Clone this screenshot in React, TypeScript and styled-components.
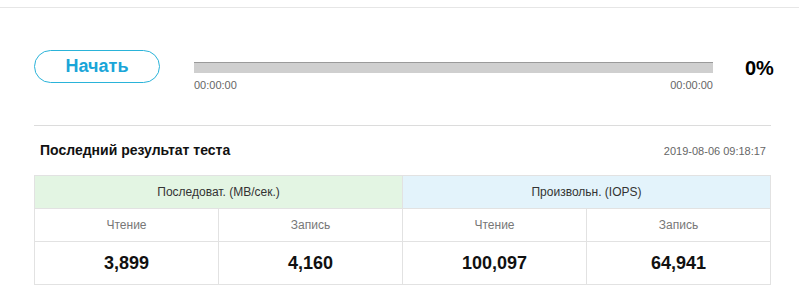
import React from "react";
import styled, { createGlobalStyle } from "styled-components";

const GlobalStyle = createGlobalStyle`
  html, body { margin: 0; padding: 0; background: #fff; }
  body { font-family: "Liberation Sans", Arial, sans-serif; }
`;

const TopRule = styled.div`
  height: 7px;
  border-bottom: 1px solid #e6e6e6;
`;

const Panel = styled.div`
  width: 737px;
  margin-left: 34px;
`;

const ProgressRow = styled.div`
  display: flex;
  align-items: flex-start;
  margin-top: 42px;
`;

const StartButton = styled.button`
  flex-shrink: 0;
  box-sizing: border-box;
  width: 126px;
  height: 33px;
  border: 1px solid #2ab3d9;
  border-radius: 17px;
  background: #fff;
  color: #1aa5d8;
  font-family: "Liberation Sans", Arial, sans-serif;
  font-weight: bold;
  font-size: 18px;
  padding: 0;
  cursor: pointer;
`;

const BarBlock = styled.div`
  flex-shrink: 0;
  width: 519px;
  margin-left: 34px;
  margin-top: 12px;
`;

const Bar = styled.div`
  box-sizing: border-box;
  height: 11px;
  background: #cfcfcf;
  border-top: 1px solid #9a9a9a;
`;

const Times = styled.div`
  display: flex;
  justify-content: space-between;
  margin-top: 6px;
  font-size: 11px;
  line-height: 13px;
  color: #666;
`;

const Percent = styled.div`
  flex-shrink: 0;
  margin-left: 32px;
  margin-top: 7px;
  font-size: 20px;
  line-height: 23px;
  font-weight: bold;
  color: #000;
`;

const Divider = styled.div`
  margin-top: 33px;
  border-top: 1px solid #dcdcdc;
`;

const TitleRow = styled.div`
  display: flex;
  justify-content: space-between;
  align-items: baseline;
  padding: 16px 5px 0 6px;
`;

const Title = styled.div`
  font-size: 14px;
  line-height: 17px;
  font-weight: bold;
  color: #111;
`;

const DateText = styled.div`
  font-size: 11px;
  color: #666;
`;

const Grid = styled.div`
  display: grid;
  grid-template-columns: repeat(4, 1fr);
  margin-top: 16px;
  border-top: 1px solid #e2e2e2;
  border-left: 1px solid #e2e2e2;
  box-sizing: border-box;
`;

const Cell = styled.div<{ $h: number; $bg?: string; $span?: number }>`
  box-sizing: border-box;
  height: ${(p) => p.$h}px;
  grid-column: span ${(p) => p.$span ?? 1};
  background: ${(p) => p.$bg ?? "#fff"};
  border-right: 1px solid #e2e2e2;
  border-bottom: 1px solid #e2e2e2;
  display: flex;
  align-items: center;
  justify-content: center;
`;

const HeadText = styled.span`
  font-size: 12px;
  color: #333;
`;

const LabelText = styled.span`
  font-size: 12px;
  color: #777;
`;

const ValueText = styled.span`
  font-size: 18px;
  font-weight: bold;
  color: #111;
`;

const labels = ["Чтение", "Запись", "Чтение", "Запись"];
const values = ["3,899", "4,160", "100,097", "64,941"];

export default function App() {
  return (
    <>
      <GlobalStyle />
      <TopRule />
      <Panel>
        <ProgressRow>
          <StartButton>Начать</StartButton>
          <BarBlock>
            <Bar />
            <Times>
              <span>00:00:00</span>
              <span>00:00:00</span>
            </Times>
          </BarBlock>
          <Percent>0%</Percent>
        </ProgressRow>
        <Divider />
        <TitleRow>
          <Title>Последний результат теста</Title>
          <DateText>2019-08-06 09:18:17</DateText>
        </TitleRow>
        <Grid>
          <Cell $h={33} $span={2} $bg="#e3f5e3">
            <HeadText>Последоват. (MB/сек.)</HeadText>
          </Cell>
          <Cell $h={33} $span={2} $bg="#e3f3fb">
            <HeadText>Произвольн. (IOPS)</HeadText>
          </Cell>
          {labels.map((l, i) => (
            <Cell key={"l" + i} $h={33}>
              <LabelText>{l}</LabelText>
            </Cell>
          ))}
          {values.map((v, i) => (
            <Cell key={"v" + i} $h={43}>
              <ValueText>{v}</ValueText>
            </Cell>
          ))}
        </Grid>
      </Panel>
    </>
  );
}
